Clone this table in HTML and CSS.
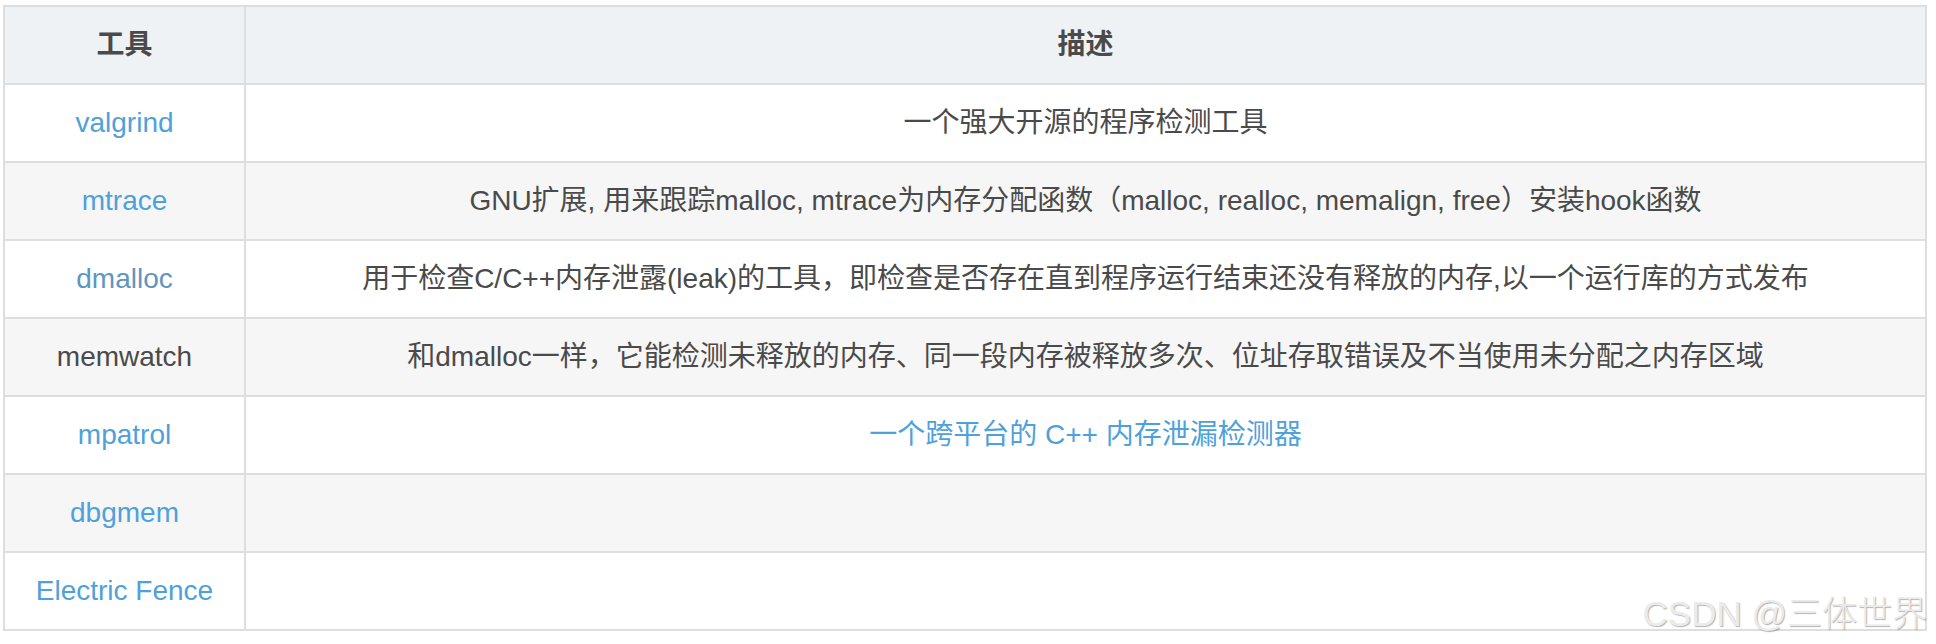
FILE: index.html
```html
<!DOCTYPE html>
<html lang="zh-CN">
<head>
<meta charset="utf-8">
<title>内存检测工具</title>
<link rel="stylesheet" href="styles.css">
</head>
<body>
<div class="page">
  <table class="tools">
    <colgroup>
      <col class="col-name">
      <col class="col-desc">
    </colgroup>
    <thead>
      <tr><th>工具</th><th>描述</th></tr>
    </thead>
    <tbody>
      <tr><td><a class="link">valgrind</a></td><td>一个强大开源的程序检测工具</td></tr>
      <tr><td><a class="link">mtrace</a></td><td>GNU扩展, 用来跟踪malloc, mtrace为内存分配函数（malloc, realloc, memalign, free）安装hook函数</td></tr>
      <tr><td><a class="link visited">dmalloc</a></td><td>用于检查C/C++内存泄露(leak)的工具，即检查是否存在直到程序运行结束还没有释放的内存,以一个运行库的方式发布</td></tr>
      <tr><td>memwatch</td><td>和dmalloc一样，它能检测未释放的内存、同一段内存被释放多次、位址存取错误及不当使用未分配之内存区域</td></tr>
      <tr><td><a class="link">mpatrol</a></td><td><a class="link">一个跨平台的 C++ 内存泄漏检测器</a></td></tr>
      <tr><td><a class="link">dbgmem</a></td><td></td></tr>
      <tr><td><a class="link">Electric Fence</a></td><td></td></tr>
    </tbody>
  </table>
  <div class="watermark">CSDN @三体世界</div>
</div>
</body>
</html>
```

FILE: styles.css
```css
html, body {
  margin: 0;
  padding: 0;
  background: #ffffff;
}

.page {
  position: relative;
  width: 1936px;
  height: 644px;
  padding: 5px 0 0 3px;
  box-sizing: border-box;
  font-family: "Liberation Sans", "Noto Sans CJK SC", Arial, sans-serif;
  font-size: 28px;
  color: #4a4a4a;
}

.tools {
  border-collapse: collapse;
  width: 1924px;
  table-layout: fixed;
  border: 2px solid #dedede;
  border-top-left-radius: 4px;
}

.col-name {
  width: 241px;
}

.tools th,
.tools td {
  border: 2px solid #dedede;
  padding: 0 10px;
  height: 76px;
  text-align: center;
  vertical-align: middle;
  line-height: 1.2;
}

.tools th {
  background: #eef2f5;
  font-weight: bold;
  color: #4a4a4a;
}

.tools tbody tr:nth-child(even) td {
  background: #f6f6f6;
}

.link {
  color: #4ea1db;
  text-decoration: none;
}

.link.visited {
  color: #5f96c0;
}

.watermark {
  position: absolute;
  right: 9px;
  bottom: 13px;
  font-family: "Liberation Sans", "Noto Sans CJK SC", sans-serif;
  font-size: 35px;
  font-weight: 300;
  color: #ebebeb;
  text-shadow: 1px 1px 1px rgba(0, 0, 0, 0.3);
  line-height: 1;
  white-space: nowrap;
}
```
